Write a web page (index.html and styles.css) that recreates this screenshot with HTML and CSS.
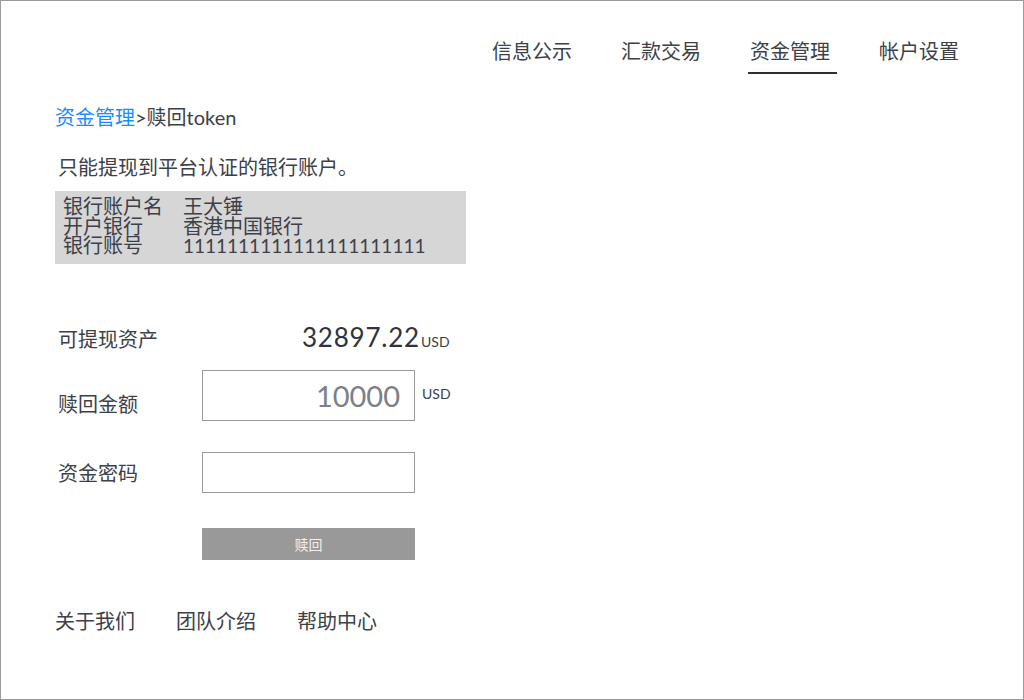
FILE: index.html
```html
<!DOCTYPE html>
<html lang="zh-CN">
<head>
<meta charset="utf-8">
<title>赎回token</title>
<link rel="stylesheet" href="styles.css">
</head>
<body>
<div class="page">
  <nav class="nav">
    <a class="nav-item">信息公示</a>
    <a class="nav-item">汇款交易</a>
    <a class="nav-item active">资金管理</a>
    <a class="nav-item">帐户设置</a>
  </nav>

  <div class="crumb"><a class="crumb-link">资金管理</a>&gt;赎回token</div>

  <p class="notice">只能提现到平台认证的银行账户。</p>

  <div class="bank">
    <span class="bank-label">银行账户名</span><span class="bank-value">王大锤</span>
    <span class="bank-label">开户银行</span><span class="bank-value">香港中国银行</span>
    <span class="bank-label">银行账号</span><span class="bank-value num">1111111111111111111111</span>
  </div>

  <div class="row row-assets">
    <span class="label">可提现资产</span>
    <span class="control amount">32897.22</span>
    <span class="unit-small">USD</span>
  </div>

  <div class="row row-redeem">
    <span class="label label-low">赎回金额</span>
    <div class="control input input-tall">10000</div>
    <span class="unit">USD</span>
  </div>

  <div class="row row-pwd">
    <span class="label">资金密码</span>
    <div class="control input input-short"></div>
  </div>

  <div class="row row-btn">
    <span class="label"></span>
    <button class="control btn">赎回</button>
  </div>

  <footer class="footer">
    <a class="foot-item">关于我们</a>
    <a class="foot-item">团队介绍</a>
    <a class="foot-item">帮助中心</a>
  </footer>
</div>
</body>
</html>
```

FILE: styles.css
```css
* { box-sizing: border-box; }
html, body { margin: 0; padding: 0; background: #fff; }
body {
  font-family: "Lato", "Noto Sans CJK SC", sans-serif;
  color: #3c4049;
  font-size: 20px;
}
.page {
  width: 1024px;
  height: 700px;
  border: 1px solid #9a9a9a;
  padding: 0 0 0 54px;
  overflow: hidden;
}
.nav {
  display: flex;
  justify-content: flex-end;
  gap: 40px;
  padding-top: 37px;
  padding-right: 57px;
}
.nav-item {
  display: block;
  font-family: "Noto Sans CJK SC", sans-serif;
  font-size: 20px;
  line-height: 26px;
  padding: 0 7px 8px 2px;
  border-bottom: 2px solid transparent;
  color: #3c4049;
}
.nav-item.active { border-bottom-color: #2b2f3a; }

.crumb {
  margin-top: 30px;
  line-height: 26px;
  font-size: 20px;
}
.crumb-link { color: #1a8cff; }

.notice {
  margin: 24px 0 0 3px;
  line-height: 26px;
  font-family: "Noto Sans CJK SC", sans-serif;
}

.bank {
  margin-top: 11px;
  width: 411px;
  height: 73px;
  background: #d6d6d6;
  padding: 6px 0 0 8px;
  display: grid;
  grid-template-columns: 120px 1fr;
  grid-auto-rows: 19.5px;
  line-height: 19.5px;
  font-family: "Lato", "Noto Sans CJK SC", sans-serif;
}
.bank-label, .bank-value { height: 19.5px; white-space: nowrap; }
.num { font-size: 19px; letter-spacing: 0; }

.row {
  display: flex;
}
.label {
  width: 144px;
  margin-left: 3px;
  line-height: 26px;
  font-family: "Noto Sans CJK SC", sans-serif;
  flex: none;
}
.control { width: 213px; flex: none; }

.row-assets {
  margin-top: 58px;
  align-items: baseline;
}
.amount {
  width: 218px;
  text-align: right;
  font-size: 26px;
  line-height: 30px;
  letter-spacing: 0.8px;
  color: #2f333d;
}
.unit-small {
  font-size: 14px;
  margin-left: 1px;
  color: #3c4049;
}

.row-redeem {
  margin-top: 18px;
  align-items: center;
}
.label-low { align-self: flex-end; margin-bottom: 4px; }
.input {
  border: 1px solid #9a9a9a;
  background: #fff;
}
.input-tall {
  height: 51px;
  font-size: 29px;
  line-height: 49px;
  text-align: right;
  padding-right: 14px;
  color: #7b8089;
}
.unit {
  font-size: 14px;
  margin-left: 7px;
  align-self: center;
  margin-top: -4px;
}

.row-pwd {
  margin-top: 31px;
  align-items: center;
}
.input-short { height: 41px; }

.row-btn { margin-top: 35px; }
.btn {
  height: 32px;
  border: 0;
  background: #999999;
  color: #f0f0f0;
  font-family: "Noto Sans CJK SC", sans-serif;
  font-size: 14px;
  padding: 0;
}

.footer {
  margin-top: 48px;
  display: flex;
  gap: 41px;
}
.foot-item {
  font-family: "Noto Sans CJK SC", sans-serif;
  line-height: 26px;
  color: #3c4049;
}
```
